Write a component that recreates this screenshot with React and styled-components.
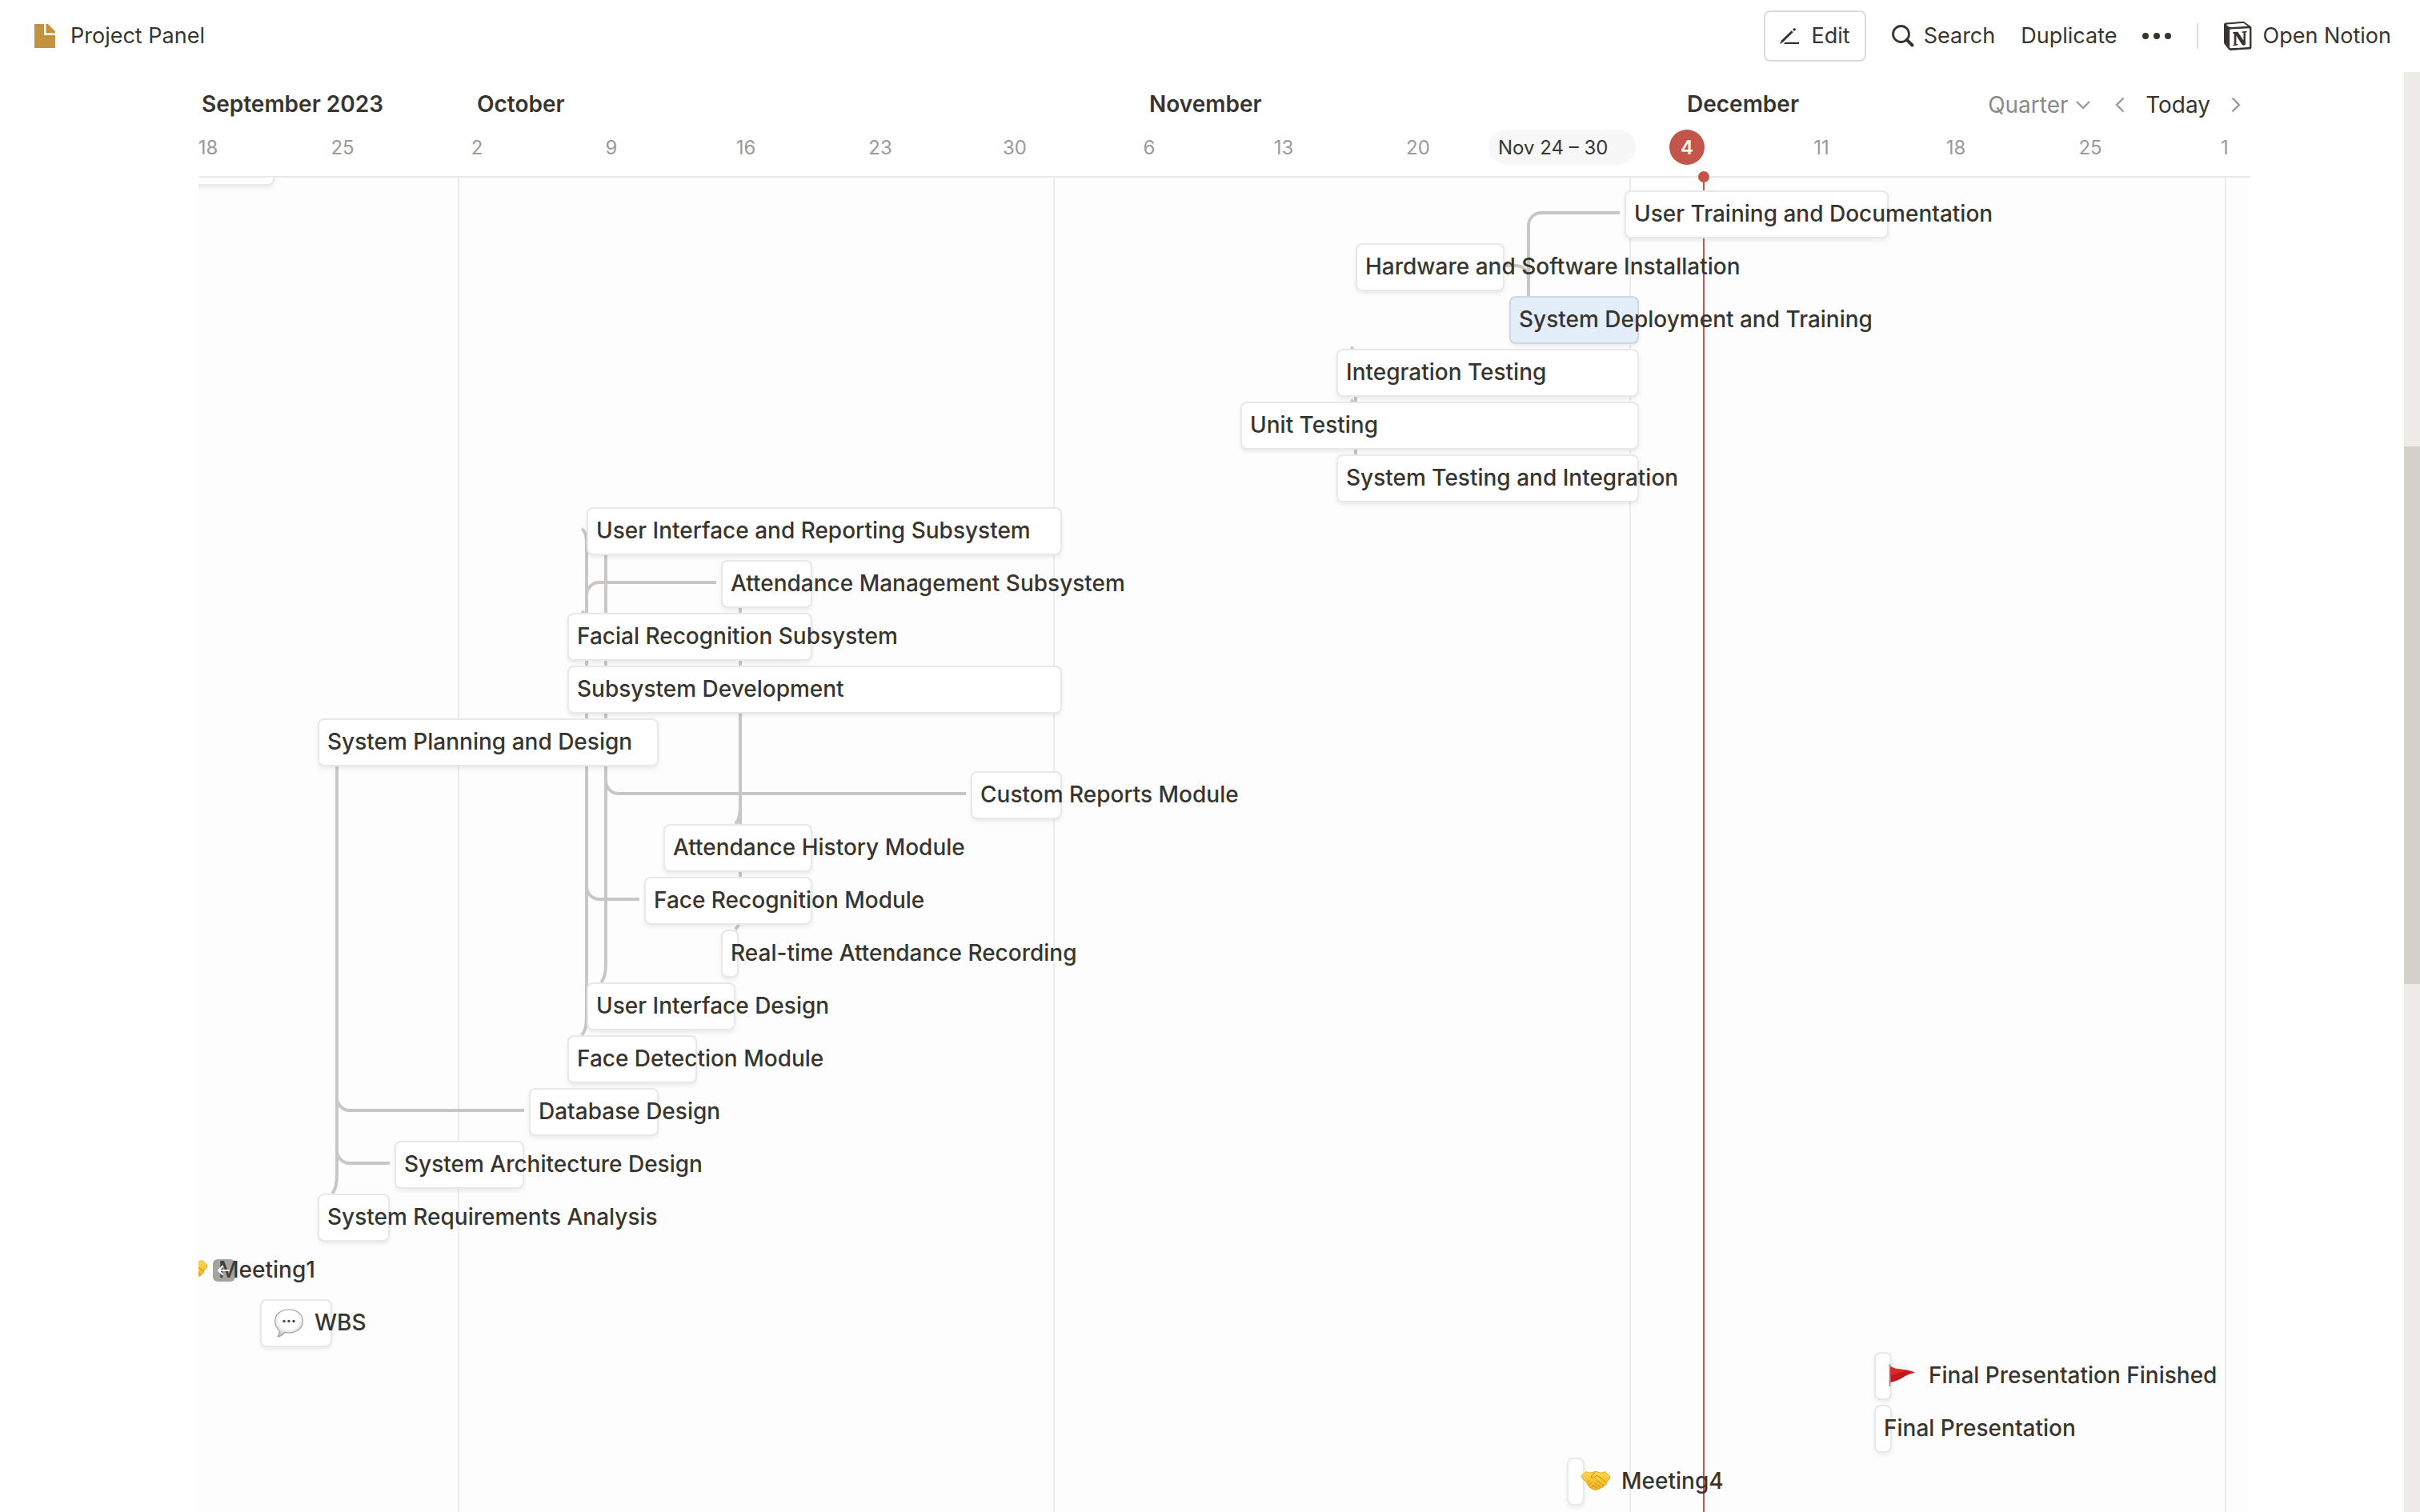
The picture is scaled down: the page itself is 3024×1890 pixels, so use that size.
import React from "react";
import styled, { createGlobalStyle, css } from "styled-components";

const ink = "#37352f";
const muted = "#9b9a97";
const line = "#e9e9e8";
const red = "#c4554a";
const linkGrey = "#c8c7c5";

const GlobalStyle = createGlobalStyle`
  *, *::before, *::after { box-sizing: border-box; }
  body {
    margin: 0;
    background: #ffffff;
    color: ${ink};
    font-family: Inter, "Liberation Sans", sans-serif;
    font-size: 28px;
    line-height: 40px;
  }
  button, select {
    font: inherit;
    color: inherit;
    background: none;
    border: 0;
    padding: 0;
    margin: 0;
    cursor: pointer;
  }
  a { color: inherit; text-decoration: none; }
`;

const Page = styled.div`
  display: flex;
  flex-direction: column;
  height: 100vh;
  overflow: hidden;
`;

const TopBar = styled.header`
  display: flex;
  align-items: center;
  justify-content: space-between;
  flex: none;
  height: 90px;
  padding: 0 36px 0 42px;
  font-size: 27px;
`;

const Crumb = styled.a`
  display: flex;
  align-items: center;
  gap: 18px;
`;

const Actions = styled.nav`
  display: flex;
  align-items: center;
  gap: 32px;
`;

const Action = styled.button`
  display: flex;
  align-items: center;
  gap: ${(p) => p.$gap || 12}px;
  height: 64px;
  ${(p) =>
    p.$framed &&
    css`
      padding: 0 18px;
      border: 2px solid #dcdcdb;
      border-radius: 8px;
    `}
`;

const Divider = styled.span`
  width: 2px;
  height: 32px;
  background: #dcdcdb;
`;

const Main = styled.main`
  display: flex;
  flex: 1;
  min-height: 0;
`;

const Timeline = styled.section`
  display: flex;
  flex-direction: column;
  flex: 1;
  min-width: 0;
  margin: 0 192px 0 248px;
`;

const Head = styled.div`
  position: relative;
  z-index: 2;
  flex: none;
  padding-bottom: 14px;
  border-bottom: 2px solid ${line};
`;

const MonthBar = styled.div`
  display: flex;
  align-items: center;
  justify-content: space-between;
  height: 72px;
  padding-top: 8px;
`;

const Months = styled.div`
  display: grid;
  grid-template-columns: 348px 840px 672px auto;
  font-weight: 600;
`;

const FirstMonth = styled.span`
  padding-left: 4px;
`;

const Controls = styled.div`
  display: flex;
  align-items: center;
  gap: 26px;
  padding: 2px 12px 0 0;
`;

const Range = styled.label`
  display: flex;
  align-items: center;
  gap: 8px;
  margin-right: 4px;
  color: #8b8a86;
  select { appearance: none; }
`;

const ArrowButton = styled.button`
  display: flex;
`;

const Dates = styled.div`
  display: flex;
  height: 44px;
  overflow: hidden;
`;

const DateCell = styled.div`
  display: flex;
  flex: none;
  justify-content: center;
  width: 24px;
  margin-right: 144px;
  font-size: 24px;
  line-height: 46px;
  color: ${muted};
`;

const TodayBadge = styled.span`
  flex: none;
  width: 44px;
  height: 44px;
  border-radius: 50%;
  background: ${red};
  color: #ffffff;
  font-weight: 600;
  text-align: center;
`;

const SelectedRange = styled.div`
  position: absolute;
  left: 1612px;
  bottom: 14px;
  width: 184px;
  height: 44px;
  padding-left: 12px;
  border-radius: 22px;
  background: #f7f7f7;
  font-size: 24px;
  line-height: 46px;
`;

const TodayDot = styled.span`
  position: absolute;
  left: 1874px;
  bottom: -8px;
  width: 14px;
  height: 14px;
  border-radius: 50%;
  background: ${red};
`;

const Canvas = styled.div`
  position: relative;
  flex: 1;
  min-height: 0;
  overflow: hidden;
  background: #fdfdfd;
`;

const MonthLine = styled.span`
  position: absolute;
  top: 0;
  bottom: 0;
  left: ${(p) => p.$at}px;
  width: 2px;
  background: ${(p) => p.$color || "#ebebea"};
`;

const Scrolled = styled.div`
  position: relative;
  margin-top: -53px;
`;

const Links = styled.svg`
  position: absolute;
  inset: 0;
  width: 100%;
  height: 100%;
  overflow: visible;
`;

const Rows = styled.ol`
  position: relative;
  margin: 0;
  padding: 0;
  list-style: none;
`;

const Row = styled.li`
  display: flex;
  height: 66px;
  padding: 3px 0;
`;

const Bar = styled.a`
  display: flex;
  align-items: center;
  flex: none;
  width: ${(p) => p.$hours}px;
  margin-left: ${(p) => p.$start}px;
  padding: 0 0 2px ${(p) => (p.$icon ? 14 : 10)}px;
  border: 2px solid ${(p) => (p.$active ? "#cbd8e8" : "#e8e8e7")};
  border-radius: 8px;
  background: ${(p) => (p.$active ? "#e4eefa" : "#ffffff")};
  box-shadow: 0 3px 5px rgba(15, 15, 15, 0.07);
  font-weight: 500;
  white-space: nowrap;
  svg { flex: none; margin-right: 12px; }
`;

const JumpBack = styled.button`
  position: absolute;
  left: 18px;
  top: 1405px;
  display: flex;
  align-items: center;
  justify-content: center;
  width: 28px;
  height: 28px;
  border-radius: 6px;
  background: rgba(77, 73, 65, 0.5);
`;

const ScrollTrack = styled.div`
  display: grid;
  grid-template-rows: 39fr 56fr 55fr;
  flex: none;
  width: 20px;
  background: #edece9;
`;

const ScrollThumb = styled.span`
  grid-row: 2;
  background: #d3d1cb;
`;

const FileIcon = () => (
  <svg width="28" height="30" viewBox="0 0 28 30" fill="#c29243" aria-hidden="true">
    <path d="M1 0h12v14h14v16H1z" />
    <path d="M15.500 0H18l9 9v2.500H15.500z" />
  </svg>
);

const PencilIcon = () => (
  <svg width="24" height="24" viewBox="0 0 24 24" aria-hidden="true" fill={ink}>
    <path d="M0 22 2 17.500 14.700 5.200 16.700 7.200 4 19.700z" />
    <path d="m16 4 1.500-1.500a1.200 1.200 0 0 1 1.700 0l.4.400a1.200 1.200 0 0 1 0 1.700L18 6z" />
    <path d="M7 19.800H24V22H4.800z" />
  </svg>
);

const SearchIcon = () => (
  <svg width="28" height="28" viewBox="0 0 28 28" fill="none" stroke={ink} strokeWidth="2.800" aria-hidden="true">
    <circle cx="11.500" cy="11.500" r="10" />
    <path d="m18.800 18.800 6.700 6.700" strokeWidth="4" strokeLinecap="round" />
  </svg>
);

const DotsIcon = () => (
  <svg width="36" height="8" viewBox="0 0 36 8" fill={ink} aria-hidden="true">
    <circle cx="4" cy="4" r="4" />
    <circle cx="18" cy="4" r="4" />
    <circle cx="32" cy="4" r="4" />
  </svg>
);

const NotionIcon = () => (
  <svg width="36" height="36" viewBox="0 0 100 100" aria-hidden="true">
    <path
      fill="#ffffff"
      d="M6.017 4.313l55.333-4.087c6.797-.583 8.543-.19 12.817 2.917l17.663 12.443c2.913 2.140 3.883 2.723 3.883 5.053v68.243c0 4.277-1.553 6.807-6.990 7.193L24.467 99.967c-4.080.193-6.023-.39-8.160-3.113L3.300 79.940c-2.333-3.113-3.300-5.443-3.300-8.167V11.113c0-3.497 1.553-6.413 6.017-6.800z"
    />
    <path
      fill={ink}
      fillRule="evenodd"
      d="M61.350.227L6.017 4.313C1.553 4.700 0 7.617 0 11.113v60.660c0 2.723.967 5.053 3.300 8.167l13.007 16.913c2.137 2.723 4.080 3.307 8.160 3.113l64.257-3.890c5.433-.387 6.990-2.917 6.990-7.193V20.640c0-2.210-.873-2.847-3.443-4.733L74.167 3.143C69.893.036 68.147-.357 61.350.227zM25.920 19.523c-5.247.353-6.437.433-9.417-1.990L8.927 11.507c-.77-.78-.383-1.753 1.557-1.947l53.193-3.887c4.467-.39 6.793 1.167 8.540 2.527l9.123 6.610c.39.197 1.360 1.360.193 1.360l-54.933 3.307-.68.047zM19.803 88.300V30.367c0-2.530.777-3.697 3.103-3.893L86 22.780c2.140-.193 3.107 1.167 3.107 3.693v57.547c0 2.530-.39 4.670-3.883 4.863l-60.377 3.500c-3.493.193-5.043-.97-5.043-4.083zm59.600-54.827c.387 1.750 0 3.500-1.750 3.700l-2.910.577v42.773c-2.527 1.360-4.853 2.137-6.797 2.137-3.107 0-3.883-.973-6.210-3.887l-19.030-29.940v28.967l6.020 1.363s0 3.500-4.857 3.500l-13.390.777c-.39-.78 0-2.723 1.357-3.110l3.497-.97v-38.300L30.480 40.667c-.39-1.750.58-4.277 3.300-4.473l14.367-.967 19.800 30.327v-26.830l-5.047-.58c-.39-2.143 1.163-3.700 3.103-3.890l13.400-.78z"
    />
  </svg>
);

const Chevron = ({ d, w, h }) => (
  <svg width={w} height={h} viewBox={`0 0 ${w} ${h}`} fill="none" stroke={muted} strokeWidth="2.400" aria-hidden="true">
    <path d={d} />
  </svg>
);

const Handshake = () => (
  <svg width="40" height="36" viewBox="0 0 40 36" aria-hidden="true">
    <defs>
      <linearGradient id="skin" x1="0" y1="0" x2="0" y2="1">
        <stop offset="0" stopColor="#ffd84a" />
        <stop offset="1" stopColor="#f3b21c" />
      </linearGradient>
    </defs>
    <path
      fill="url(#skin)"
      stroke="#d9930f"
      strokeWidth=".8"
      strokeLinejoin="round"
      d="M2 12 8 6.500c3 2 6 1.800 9 .6 2.500-1 4.500-.6 6.500.3 3 1.200 5.500.6 8-.9L38 13c-.5 3-2.500 5-5 7 1 2.500-.8 4-2.800 3.400.2 2.300-1.800 3.600-3.700 2.600-.3 2.100-2.400 3-4 1.800-1.200 2.300-3.800 2.500-5 .8-1.700.7-3.300-.4-3.400-2-2 .1-3.200-1.300-2.800-3-2.100-.2-3-1.800-2-3.600C6 18 3 15.500 2 12z"
    />
    <path
      fill="none"
      stroke="#c98a10"
      strokeWidth="1"
      strokeLinecap="round"
      strokeLinejoin="round"
      d="M19 7.500c-2.500 1.800-4 4-4.700 6.400 2.400 1 5-.3 6.700-2.700 4 2 8 5.500 12 8.800M21 17.500l8.500 6M18.500 20.500l7 5.400M16.500 23.500l5.500 4M9.500 20l2.500-2.500M11.500 23.400l3.500-3.600M14.300 26.300l3-3"
    />
  </svg>
);

const Balloon = () => (
  <svg width="40" height="40" viewBox="0 0 40 40" aria-hidden="true">
    <defs>
      <radialGradient id="bubble" cx=".5" cy=".35" r=".65">
        <stop offset=".55" stopColor="#ffffff" />
        <stop offset="1" stopColor="#c4c4c4" />
      </radialGradient>
    </defs>
    <path
      fill="url(#bubble)"
      stroke="#a0a0a0"
      strokeWidth="1.100"
      d="M20 4c10 0 17.400 5.900 17.400 14.500S30 33 20 33c-1.800 0-3.600-.2-5.200-.6-2.300 3-5.300 5-8.800 5.600 1.600-2.200 2.200-4.700 2.100-7.800C4.500 27.200 2.600 23.300 2.600 18.500 2.600 9.900 10 4 20 4z"
    />
    <g fill="#4a4a4a">
      <circle cx="14" cy="18.500" r="1.700" />
      <circle cx="20" cy="18.500" r="1.700" />
      <circle cx="26" cy="18.500" r="1.700" />
    </g>
  </svg>
);

const Flag = () => (
  <svg width="40" height="40" viewBox="0 0 40 40" aria-hidden="true">
    <path d="M3.500 6v28" stroke="#8a9299" strokeWidth="1.600" />
    <path d="M4.300 9c4 2.600 8.500 3.200 14 3.800 6 .6 11 1.600 16.700 3.700-5.500 1.600-10 3-15 6.200-5.500 3.300-10 5.300-15.700 6.300z" fill="#c5161d" />
    <path d="M4.300 9c4 2.600 8.500 3.200 14 3.800 3 .3 5.500.7 8 1.300-7 .6-14 5-22 6z" fill="#d92a28" />
  </svg>
);

const icons = { handshake: Handshake, balloon: Balloon, flag: Flag };

// The scale is one pixel per hour: a day is 24px, a week 168px.
const tasks = [
  { title: "", start: -95, hours: 190 },
  { title: "User Training and Documentation", start: 1782, hours: 330 },
  { title: "Hardware and Software Installation", start: 1446, hours: 186 },
  { title: "System Deployment and Training", start: 1638, hours: 162, active: true },
  { title: "Integration Testing", start: 1422, hours: 378 },
  { title: "Unit Testing", start: 1302, hours: 498 },
  { title: "System Testing and Integration", start: 1422, hours: 378 },
  { title: "User Interface and Reporting Subsystem", start: 485, hours: 594 },
  { title: "Attendance Management Subsystem", start: 653, hours: 114 },
  { title: "Facial Recognition Subsystem", start: 461, hours: 306 },
  { title: "Subsystem Development", start: 461, hours: 618 },
  { title: "System Planning and Design", start: 149, hours: 426 },
  { title: "Custom Reports Module", start: 965, hours: 114 },
  { title: "Attendance History Module", start: 581, hours: 186 },
  { title: "Face Recognition Module", start: 557, hours: 210 },
  { title: "Real-time Attendance Recording", start: 653, hours: 22 },
  { title: "User Interface Design", start: 485, hours: 186 },
  { title: "Face Detection Module", start: 461, hours: 162 },
  { title: "Database Design", start: 413, hours: 162 },
  { title: "System Architecture Design", start: 245, hours: 162 },
  { title: "System Requirements Analysis", start: 149, hours: 90 },
  { title: "Meeting1", start: -43, hours: 22, icon: "handshake" },
  { title: "WBS", start: 77, hours: 90, icon: "balloon" },
  { title: "Final Presentation Finished", start: 2094, hours: 22, icon: "flag" },
  { title: "Final Presentation", start: 2094, hours: 22 },
  { title: "Meeting4", start: 1710, hours: 22, icon: "handshake" },
];

const rowMid = (row) => row * 66 + 31;
const up = (x, row, end) => `M${x} ${rowMid(row) + 16}a16 16 0 0 1 16 -16H${end}`;
const down = (x, row, end) => `M${x} ${rowMid(row) - 16}a16 16 0 0 0 16 16H${end}`;
const hookUp = (x, y) => `M${x - 6} ${y}q6 4 6 18`;
const hookDown = (x, y) => `M${x} ${y - 24}q0 18 -6 24`;
const stem = (x, from, to) => `M${x} ${from}V${to}`;

const links = [
  stem(1662, 113, 203),
  up(1662, 1, 1776),
  `M1632 ${rowMid(2)}h14a16 16 0 0 1 16 16`,
  hookUp(1446, 265),
  hookUp(1446, 331),
  stem(1446, 283, 402),
  hookUp(485, 492),
  stem(485, 510, 1101),
  up(485, 8, 647),
  hookUp(485, 595),
  down(485, 14, 551),
  hookDown(485, 1125),
  stem(509, 520, 1035),
  down(509, 12, 959),
  hookDown(509, 1059),
  stem(677, 590, 970),
  hookDown(677, 861),
  hookDown(677, 993),
  stem(173, 780, 1299),
  down(173, 18, 407),
  down(173, 19, 239),
  hookDown(173, 1323),
];

const weeks = ["18", "25", "2", "9", "16", "23", "30", "6", "13", "20", "", "4", "11", "18", "25", "1"];

export default function App() {
  return (
    <>
      <GlobalStyle />
      <Page>
        <TopBar>
          <Crumb href="#project-panel">
            <FileIcon />
            Project Panel
          </Crumb>
          <Actions>
            <Action $framed $gap={16}><PencilIcon />Edit</Action>
            <Action><SearchIcon />Search</Action>
            <Action>Duplicate</Action>
            <Action aria-label="More"><DotsIcon /></Action>
            <Divider />
            <Action><NotionIcon />Open Notion</Action>
          </Actions>
        </TopBar>
        <Main>
          <Timeline>
            <Head>
              <MonthBar>
                <Months>
                  <FirstMonth>September 2023</FirstMonth>
                  <span>October</span>
                  <span>November</span>
                  <span>December</span>
                </Months>
                <Controls>
                  <Range>
                    <select aria-label="Time scale" defaultValue="Quarter">
                      <option>Quarter</option>
                    </select>
                    <Chevron w={20} h={12} d="M2 2l8 8 8-8" />
                  </Range>
                  <ArrowButton aria-label="Earlier"><Chevron w={12} h={20} d="M10.500 1.500 2 10l8.500 8.500" /></ArrowButton>
                  <button>Today</button>
                  <ArrowButton aria-label="Later"><Chevron w={12} h={20} d="M1.500 1.500 10 10l-8.500 8.500" /></ArrowButton>
                </Controls>
              </MonthBar>
              <Dates>
                {weeks.map((day, i) => (
                  <DateCell key={i}>{i === 11 ? <TodayBadge>{day}</TodayBadge> : day}</DateCell>
                ))}
              </Dates>
              <SelectedRange>Nov 24 – 30</SelectedRange>
              <TodayDot />
            </Head>
            <Canvas>
              {[324, 1068, 1788, 2532].map((at) => (
                <MonthLine key={at} $at={at} />
              ))}
              <MonthLine $at={1880} $color={red} />
              <Scrolled>
                <Links fill="none" stroke={linkGrey} strokeWidth="4" aria-hidden="true">
                  {links.map((d) => (
                    <path key={d} d={d} />
                  ))}
                </Links>
                <Rows>
                  {tasks.map((task, i) => {
                    const Icon = icons[task.icon];
                    return (
                      <Row key={i}>
                        <Bar href="#task" $start={task.start} $hours={task.hours} $active={task.active} $icon={!!Icon}>
                          {Icon && <Icon />}
                          {task.title}
                        </Bar>
                      </Row>
                    );
                  })}
                </Rows>
                <JumpBack aria-label="Scroll to item">
                  <svg width="18" height="14" viewBox="0 0 18 14" fill="none" stroke="#ffffff" strokeWidth="2.200" strokeLinecap="round" strokeLinejoin="round" aria-hidden="true">
                    <path d="M15 7H2m5-5L2 7l5 5" />
                  </svg>
                </JumpBack>
              </Scrolled>
            </Canvas>
          </Timeline>
          <ScrollTrack>
            <ScrollThumb />
          </ScrollTrack>
        </Main>
      </Page>
    </>
  );
}
